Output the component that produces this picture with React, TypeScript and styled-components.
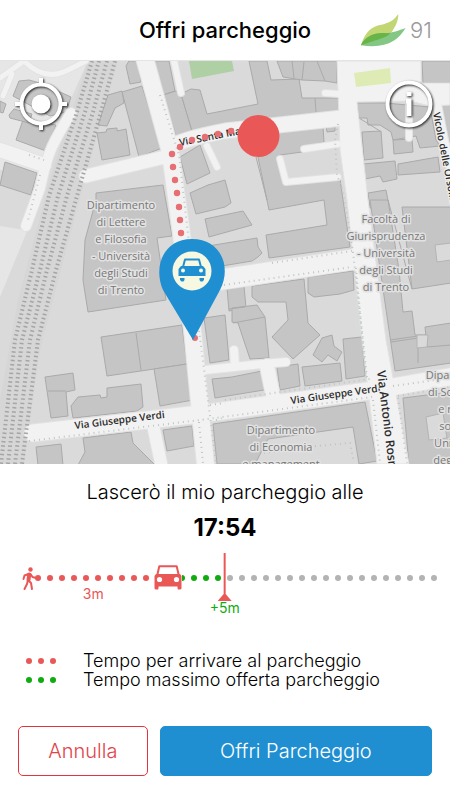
import React, { useState } from "react";
import styled, { createGlobalStyle } from "styled-components";

const RED = "#e95857";
const GREEN = "#10ab10";
const GREY = "#b3b3b3";
const BLUE = "#208fd1";

const GlobalStyle = createGlobalStyle`
  * { box-sizing: border-box; }
  body { margin: 0; background: #fff; color: #000; font-family: Inter, "Liberation Sans", sans-serif; }
  button, input { font: inherit; }
`;

const Screen = styled.div`
  display: flex;
  flex-direction: column;
  min-height: 100vh;
`;

const Header = styled.header`
  display: grid;
  grid-template-columns: 1fr auto 1fr;
  align-items: center;
  height: 61px;
  padding: 0 18px;
  border-bottom: 1px solid #e4e4e4;
`;

const Title = styled.h1`
  grid-column: 2;
  margin: 0;
  font-size: 22px;
  line-height: 28px;
  font-weight: 500;
`;

const Score = styled.div`
  display: flex;
  align-items: center;
  justify-content: flex-end;
  gap: 4px;
  color: #999;
  font-size: 22px;
  line-height: 28px;
  font-weight: 300;
`;

const MapArea = styled.main`
  position: relative;
  flex: 1 0 300px;
  background: #dadada;
  overflow: hidden;
`;

const MapDrawing = styled.svg`
  position: absolute;
  inset: 0;
  width: 100%;
  height: 100%;
`;

const MapButton = styled.button<{ $side: "left" | "right" }>`
  position: absolute;
  top: 14px;
  ${(p) => p.$side}: 12px;
  width: 58px;
  height: 58px;
  padding: 0;
  border: 0;
  background: none;
  cursor: pointer;
  svg { display: block; filter: drop-shadow(1px 1px 1px #222); }
`;

const Panel = styled.section`
  display: flex;
  flex-direction: column;
  padding: 14px 0 24px;
`;

const Question = styled.p`
  margin: 0;
  text-align: center;
  font-size: 20px;
  line-height: 28px;
  font-weight: 300;
`;

const Time = styled.strong`
  margin-top: 8px;
  text-align: center;
  font-size: 24px;
  line-height: 28px;
  font-weight: 700;
`;

const Timeline = styled.div`
  position: relative;
  height: 80px;
  margin: 8px 13px 0 35px;
`;

const Track = styled.div`
  display: flex;
  align-items: center;
  justify-content: space-between;
  height: 56px;
`;

const Dot = styled.span<{ $color: string }>`
  width: 6px;
  height: 6px;
  border-radius: 50%;
  background: ${(p) => p.$color};
`;

const Walker = styled.svg`
  position: absolute;
  left: -13px;
  top: 17px;
`;

const CarSpot = styled.div`
  position: absolute;
  left: 33%;
  top: 15px;
  width: 28px;
  margin-left: -14px;
  background: #fff;
  svg { display: block; }
`;

const WalkTime = styled.div`
  position: absolute;
  top: 36px;
  left: 0;
  width: 29%;
  color: ${RED};
  text-align: center;
  font-size: 14px;
  line-height: 16px;
`;

const Extension = styled.div`
  position: absolute;
  left: 32%;
  right: 0;
  top: 3px;
`;

const Slider = styled.input`
  display: block;
  appearance: none;
  width: 100%;
  height: 48px;
  margin: 0;
  background: none;
  cursor: pointer;
  &::-webkit-slider-thumb {
    appearance: none;
    width: 14px;
    height: 48px;
    background: ${RED};
    clip-path: polygon(6px 0, 8px 0, 8px 41px, 14px 48px, 0 48px, 6px 41px);
  }
`;

const ExtraTime = styled.output`
  position: absolute;
  top: 47px;
  transform: translateX(-50%);
  color: ${GREEN};
  font-size: 14px;
  line-height: 16px;
`;

const Legend = styled.ul`
  display: grid;
  gap: 1px;
  margin: 22px 26px 0;
  padding: 0;
  list-style: none;
  font-size: 18px;
  line-height: 18px;
  font-weight: 300;
`;

const LegendRow = styled.li`
  display: flex;
  align-items: center;
  gap: 27px;
`;

const LegendDots = styled.span`
  display: flex;
  gap: 6px;
`;

const Actions = styled.div`
  display: grid;
  grid-template-columns: 130fr 273fr;
  gap: 12px;
  margin: 37px 18px 0;
`;

const Action = styled.button<{ $primary?: boolean }>`
  height: 50px;
  padding: 0;
  border: 1px solid ${(p) => (p.$primary ? BLUE : "#e2343b")};
  border-radius: 5px;
  background: ${(p) => (p.$primary ? BLUE : "#fff")};
  color: ${(p) => (p.$primary ? "#fff" : "#e2444a")};
  font-size: 20px;
  font-weight: 300;
  cursor: pointer;
`;

const buildings = [
  "126,66 129,61 138,61 141,82 130,84",
  "122,92 142,86 162,148 139,157",
  "108,95 122,91 124,103 115,108 107,126 98,125",
  "97,133 106,132 107,129 117,128 117,131 126,129 130,155 102,160",
  "151,61 169,61 175,91 163,95",
  "163,95 176,91 181,94 192,131 176,136",
  "181,94 191,89 200,90 207,114 258,104 249,61 267,61 271,80 299,79 302,98 340,98 340,112 225,124 192,131",
  "277,61 337,61 337,83 325,81 302,80 283,77",
  "243,137 323,127 324,142 302,147 302,152 280,155 287,185 340,179 343,200 350,247 269,258 266,235 327,225 324,200 269,210 258,157",
  "326,126 335,125 335,131 327,132",
  "180,157 200,145 210,173 187,184",
  "190,193 208,185 225,180 231,203 225,207 196,214",
  "5,162 37,173 31,195 0,185",
  "16,140 23,120 56,125 46,151",
  "13,96 19,81 29,80 40,83 71,97 66,112 50,116",
  "9,115 14,109 32,114 29,123 10,118",
  "0,101 6,104 3,113 0,112",
  "96,193 163,185 172,236 157,238 166,300 88,312 83,280 85,240 96,200",
  "357,103 385,103 430,107 436,140 440,146 420,148 416,136 393,140 391,132 380,125 368,125 367,118 359,118",
  "362,132 381,131 383,158 364,160",
  "393,140 412,139 413,152 394,154",
  "363,164 395,161 397,179 383,182 380,176 365,179",
  "398,164 438,157 440,172 398,175",
  "368,193 386,190 389,206 370,208",
  "422,61 451,61 451,83 423,83",
  "441,105 451,104 451,140 446,144",
  "205,219 243,211 252,225 209,237",
  "208,246 257,238 258,247 262,253 258,257 252,261 210,268",
  "227,288 244,286 246,308 229,311",
  "252,286 304,279 308,323 320,335 293,359 272,337 288,320 286,302 258,302 252,297",
  "308,277 353,271 354,290 340,294 314,297 308,293",
  "232,308 257,305 265,317 269,358 250,359 238,323 232,322",
  "313,355 322,338 332,335 334,346 342,352 337,361 328,355 322,362",
  "343,339 362,337 365,376 346,379",
  "277,367 298,364 300,386 280,390",
  "302,367 340,363 342,381 305,386",
  "212,379 232,377 262,371 264,390 215,398",
  "204,318 225,315 229,360 210,363",
  "370,200 388,200 399,270 403,312 412,311 415,335 451,335 451,363 395,371",
  "402,207 451,207 451,283 412,289",
  "425,327 451,323 451,345 427,347",
  "213,424 365,402 377,461 359,464 353,427 268,439 255,464 217,464",
  "403,398 451,392 451,465 409,465",
  "101,337 182,325 187,364 154,369 107,376",
  "154,369 187,364 193,400 160,406",
  "45,377 73,373 75,390 66,392 68,416 51,418",
  "71,406 78,397 100,395 101,398 107,397 107,388 141,384 143,407 137,411 73,418",
  "163,430 192,426 194,446 167,451",
  "36,447 61,444 63,465 38,465",
  "83,438 131,432 133,443 155,465 78,465 85,452",
];

const walls = "M136 333L141 370M48 391L66 391M390 340L418 336L418 363M391 342L418 338M302 80L304 62M292 61L294 78M317 61L325 81M315 98L316 112M256 157L267 200M359 118L380 131M388 200L412 289M229 309L245 307M233 323L265 317";

const roads: [string, number][] = [
  ["M0 150L44 165", 14],
  ["M71 113Q58 134 52 147T40 188L26 226", 10],
  ["M0 78L24 61M24 61Q45 82 68 70L86 61M3 96L12 74", 5],
  ["M86 176L165 157", 13],
  ["M170 148Q178 140 225 131L342 118", 15],
  ["M144 56L170 150L181 230L193 335L206 470", 17],
  ["M198 284L225 279L356 259", 20],
  ["M33 433L200 414L375 390L455 376", 17],
  ["M205 370L262 364L286 362M234 350L235 366", 8],
  ["M267 366L273 396", 14],
  ["M153 425L162 468", 12],
  ["M173 56L181 93", 6],
  ["M207 146L217 167", 6],
  ["M325 93L340 94M409 100L409 138M280 159L286 182L338 177M304 149L338 144", 6],
  ["M437 104L444 140L456 190", 8],
];

const paths =
  "M160 95L179 155L199 330L216 463M29 441L200 420L372 397M225 400L370 379M393 386L450 378M398 396L450 387M224 285L352 267M272 263L352 251M338 124L335 140L337 175L343 192L353 252L363 340L367 378M356 268L366 378M373 400L380 463M398 398L407 463M199 422L203 463M210 405L225 403M216 420L225 417M29 155L44 160M40 175L28 220M305 447L350 443L354 462M264 453L300 448";

const rails = [
  "M92 61L77 112L49 196L32 270L15 340L1 464",
  "M99 61L85 112L58 196L40 270L22 340L8 464",
  "M107 61L93 112L67 196L47 270L30 340L15 464",
  "M115 61L101 112L77 196L56 270L38 340L22 464",
];

const route: [number, number][] = [
  [231, 131], [218, 134], [205, 137], [192, 140], [180, 147], [172, 154], [173, 167],
  [175, 180], [177, 193], [179, 207], [180, 220], [181, 233],
];

const places: { x: number; y: number; lines: string[] }[] = [
  { x: 121, y: 209, lines: ["Dipartimento", "di Lettere", "e Filosofia", "- Università", "degli Studi", "di Trento"] },
  { x: 386, y: 223, lines: ["Facoltà di", "Giurisprudenza", "- Università", "degli Studi", "di Trento"] },
  { x: 281, y: 434, lines: ["Dipartimento", "di Economia", "e management"] },
  { x: 460, y: 379, lines: ["Dipartimento", "di Sociologia", "e ricerca", "sociale -", "Università", "degli Studi"] },
];

const PlaceText = styled.text`
  font: 500 11px "Open Sans", "Noto Sans", sans-serif;
  text-anchor: middle;
  fill: #777;
  stroke: #e2e2e2;
  stroke-width: 3px;
  stroke-linejoin: round;
  paint-order: stroke;
`;

const StreetText = styled.text<{ $size: number }>`
  font: 600 ${(p) => p.$size}px "Open Sans", "Noto Sans", sans-serif;
  fill: #2a2a2a;
  stroke: #f2f2f2;
  stroke-width: 2px;
  paint-order: stroke;
`;

function CarShape({ color, light }: { color: string; light: string }) {
  return (
    <g>
      <path d="M3.4 9.5L5.3 1.3H22.7L24.6 9.5" fill="none" stroke={color} strokeWidth="2" strokeLinejoin="round" />
      <path d="M2 9H26L27.500 11V23Q27.500 24.500 26 24.500H24.500Q23.500 24.500 23.500 23V21.500H4.500V23Q4.500 24.500 3.500 24.500H2Q.5 24.500 .5 23V11Z" fill={color} />
      <circle cx="5.500" cy="14.500" r="2.600" fill={light} />
      <circle cx="22.500" cy="14.500" r="2.600" fill={light} />
    </g>
  );
}

function CityMap() {
  return (
    <MapDrawing viewBox="0 61 450 403" preserveAspectRatio="xMidYMid slice" role="img" aria-label="Mappa di Trento">
      <rect x="0" y="61" width="450" height="403" fill="#dadada" />
      <path d="M0 61H88L48 150L28 229L0 297ZM0 226L23 231" fill="#e6e6e6" />
      <path d="M0 170L44 178L25 230L0 226Z" fill="#dadada" />
      <path d="M88 61H118L78 205L40 350L24 464H0V400L18 300L50 180Z" fill="#d6d6d6" />
      <g fill="#c5c5c5" stroke="#aaa" strokeWidth="1" strokeLinejoin="round">
        {buildings.map((points) => (
          <polygon key={points} points={points} />
        ))}
        <path d={walls} fill="none" />
      </g>
      <g fill="#dadada" stroke="#b4b4b4">
        <path d="M435 245L451 243V260L437 262Z" />
        <path d="M426 417L443 413L447 438L429 440Z" />
        <path d="M417 335H428L427 347L417 348Z" />
      </g>
      <path d="M189 61H232L234 71L192 79Z" fill="#afcfa5" />
      <g fill="none" stroke="#e2e2e2" strokeLinecap="round" strokeLinejoin="round">
        {roads.map(([d, width]) => (
          <path key={d} d={d} strokeWidth={width + 2} />
        ))}
      </g>
      <path d="M337 61H421V83H450V105L430 106L410 101L357 102L368 200L386 340L409 464H377L362 340L347 200L340 150Z" fill="#f2f2f2" stroke="#e2e2e2" />
      <g fill="none" stroke="#f2f2f2" strokeLinecap="round" strokeLinejoin="round">
        {roads.map(([d, width]) => (
          <path key={d} d={d} strokeWidth={width} />
        ))}
      </g>
      <path d="M354 73L390 68L391 83L356 87Z" fill="#deebb5" />
      <path d={paths} fill="none" stroke="#bcc7c2" strokeWidth="2" strokeDasharray="1 4" />
      <g fill="none" stroke="#a5a5a5" strokeWidth="4" strokeDasharray="1.500 2.800">
        {rails.map((d) => (
          <path key={d} d={d} />
        ))}
      </g>
      {places.map((place) =>
        place.lines.map((line, i) => (
          <PlaceText key={`${place.x}-${line}`} x={place.x} y={place.y + i * 17}>
            {line}
          </PlaceText>
        ))
      )}
      <StreetText $size={10} transform="translate(180 146) rotate(-11)">Via Santa Maria</StreetText>
      <StreetText $size={10} transform="translate(75 429) rotate(-7)">Via Giuseppe Verdi</StreetText>
      <StreetText $size={10} transform="translate(291 404) rotate(-8)">Via Giuseppe Verdi</StreetText>
      <StreetText $size={12} transform="translate(377 371) rotate(83)">Via Antonio Rosmini</StreetText>
      <StreetText $size={10} transform="translate(433 113) rotate(79)">Vicolo delle Orsoline</StreetText>
      <g fill="#e76e72">
        {route.map(([x, y]) => (
          <circle key={`${x}-${y}`} cx={x} cy={y} r="3.200" />
        ))}
        <circle cx="195" cy="338" r="3" />
      </g>
      <circle cx="258.500" cy="136" r="21" fill={RED} />
      <path d="M193 340L163 290C153 267 163 239 192 239S232 267 220 290Z" fill={BLUE} />
      <circle cx="192" cy="271" r="19.500" fill="#f7f8e1" />
      <g transform="translate(178 258)">
        <path d="M5 9L7 1.500H21L23 9" fill="none" stroke={BLUE} strokeWidth="2" strokeLinejoin="round" />
        <path d="M3 8H25L27.500 11V18H.5V11ZM2 20H6.500V22L5.500 23.500H3.500L2 22ZM21.500 20H26V22L24.500 23.500H22.500L21.500 22Z" fill={BLUE} />
        <circle cx="5" cy="12.500" r="2" fill="#f7f8e1" />
        <circle cx="23" cy="12.500" r="2" fill="#f7f8e1" />
      </g>
    </MapDrawing>
  );
}

function Leaf() {
  return (
    <svg width="45" height="33" viewBox="0 0 135 99" aria-hidden="true">
      <path d="M112 0C113 22 99 47 86 61C55 68 26 78 0 94C8 65 24 43 48 35C72 30 93 27 112 0Z" fill="#c2d773" />
      <path d="M134 42C111 80 76 105 0 94C10 70 35 58 65 57C91 59 110 50 134 42Z" fill="#84c683" />
      <path d="M0 94C10 70 35 57 65 57L88 58C76 73 34 81 0 94Z" fill="#68b448" />
    </svg>
  );
}

const ARRIVAL = 17 * 60 + 49;
const MAX_EXTRA = 24;
const DOT_COUNT = 34;

export default function App() {
  const [extra, setExtra] = useState(5);
  const ratio = extra / MAX_EXTRA;
  const total = ARRIVAL + extra;
  const time = `${Math.floor(total / 60)}:${String(total % 60).padStart(2, "0")}`;
  const marker = 0.337 + 0.645 * ratio;

  const dotColor = (i: number) => {
    if (i < 12) return RED;
    return i / (DOT_COUNT - 1) < marker ? GREEN : GREY;
  };

  return (
    <Screen>
      <GlobalStyle />
      <Header>
        <Title>Offri parcheggio</Title>
        <Score>
          <Leaf />
          91
        </Score>
      </Header>
      <MapArea>
        <CityMap />
        <MapButton $side="left" aria-label="Centra sulla mia posizione">
          <svg width="58" height="58" viewBox="0 0 58 58" fill="none" stroke="#fff" strokeWidth="4">
            <circle cx="29" cy="29" r="19.500" />
            <circle cx="29" cy="29" r="9.500" fill="#fff" stroke="none" />
            <path d="M29 3V11M29 47V55M3 29H11M47 29H55" />
          </svg>
        </MapButton>
        <MapButton $side="right" aria-label="Informazioni">
          <svg width="58" height="58" viewBox="0 0 58 58" fill="none" stroke="#fff" strokeWidth="4">
            <circle cx="29" cy="29" r="21.500" />
            <path d="M29 17V21M26 26H29V41" strokeWidth="5" />
          </svg>
        </MapButton>
      </MapArea>
      <Panel>
        <Question id="question">Lascerò il mio parcheggio alle</Question>
        <Time>{time}</Time>
        <Timeline>
          <Track>
            {Array.from({ length: DOT_COUNT }, (_, i) => (
              <Dot key={i} $color={dotColor(i)} />
            ))}
          </Track>
          <Walker width="16" height="24" viewBox="0 0 16 24" fill="none" stroke={RED} strokeWidth="2" strokeLinecap="round" strokeLinejoin="round" aria-hidden="true">
            <circle cx="8.500" cy="2.500" r="2.200" fill={RED} stroke="none" />
            <path d="M7.500 7L6 13L9 16L10 22M6 13L5 17L2.500 22M6.500 7L2.500 8.500L1.500 12M8.500 7L10.500 10L14 11" />
            <path d="M7.200 7.500L6.500 13" strokeWidth="4" />
          </Walker>
          <CarSpot>
            <svg width="28" height="25" viewBox="0 0 28 25" aria-hidden="true">
              <CarShape color={RED} light="#fff" />
            </svg>
          </CarSpot>
          <WalkTime>3m</WalkTime>
          <Extension>
            <Slider
              type="range"
              min={0}
              max={MAX_EXTRA}
              value={extra}
              aria-labelledby="question"
              onChange={(e) => setExtra(Number(e.target.value))}
            />
            <ExtraTime style={{ left: `calc(7px + (100% - 14px) * ${ratio})` }}>+{extra}m</ExtraTime>
          </Extension>
        </Timeline>
        <Legend>
          <LegendRow>
            <LegendDots>
              <Dot $color={RED} />
              <Dot $color={RED} />
              <Dot $color={RED} />
            </LegendDots>
            Tempo per arrivare al parcheggio
          </LegendRow>
          <LegendRow>
            <LegendDots>
              <Dot $color={GREEN} />
              <Dot $color={GREEN} />
              <Dot $color={GREEN} />
            </LegendDots>
            Tempo massimo offerta parcheggio
          </LegendRow>
        </Legend>
        <Actions>
          <Action type="button">Annulla</Action>
          <Action type="button" $primary>
            Offri Parcheggio
          </Action>
        </Actions>
      </Panel>
    </Screen>
  );
}
